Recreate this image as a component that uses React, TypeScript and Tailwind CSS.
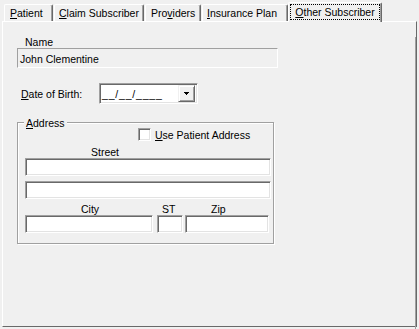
const sunken =
  'border border-t-[#a0a0a0] border-l-[#a0a0a0] border-b-white border-r-white bg-white shadow-[inset_1px_1px_0_#696969,inset_-1px_-1px_0_#e3e3e3]';

const tabBase =
  'flex h-[17px] items-center rounded-t-[2px] border-t border-l border-r border-t-white border-l-white border-r-[#696969] shadow-[inset_-1px_0_0_#a0a0a0]';

function Key({ children }: { children: string }) {
  return <span className="underline underline-offset-[1px]">{children}</span>;
}

export default function App() {
  return (
    <div className="flex h-[329px] w-[419px] flex-col bg-[#f0f0f0] px-[2px] pt-[2px] pb-[2px] font-['Liberation_Sans',Arial,sans-serif] text-[10.5px] leading-[12px] text-black">
      {/* tab strip */}
      <div className="flex h-[19px] items-end pl-[2px]">
        <div className={`${tabBase} mr-[1px] w-[49px] pl-[5px]`}>
          <span>
            <Key>P</Key>atient
          </span>
        </div>
        <div className={`${tabBase} mr-[1px] w-[90px] pl-[4px]`}>
          <span>
            <Key>C</Key>laim Subscriber
          </span>
        </div>
        <div className={`${tabBase} mr-[1px] w-[56px] pl-[5px]`}>
          <span>
            Pro<Key>v</Key>iders
          </span>
        </div>
        <div className={`${tabBase} w-[86px] pl-[4px]`}>
          <span>
            <Key>I</Key>nsurance Plan
          </span>
        </div>
        <div className="relative z-10 -mb-px flex h-[20px] w-[94px] items-start rounded-t-[2px] border-t border-l border-r border-t-white border-l-white border-r-[#696969] bg-[#f0f0f0] pt-[1px] pl-[1px] shadow-[inset_-1px_0_0_#a0a0a0]">
          <div className="flex h-[16px] w-[90px] items-center justify-center border border-dotted border-black">
            <span>
              <Key>O</Key>ther Subscriber
            </span>
          </div>
        </div>
      </div>

      {/* page */}
      <div className="flex-1 border border-t-white border-l-white border-r-[#696969] border-b-[#696969]">
        <div className="h-full border-r border-b border-r-[#a0a0a0] border-b-[#a0a0a0]">
          <div className="mt-[15px] ml-[22px] h-[11px] leading-[11px]">Name</div>
          <div className="ml-[14px] flex h-[20px] w-[261px] items-center border border-t-[#a0a0a0] border-l-[#a0a0a0] border-b-white border-r-white pt-[1px] pl-[2px]">
            John Clementine
          </div>

          <div className="mt-[15px] flex h-[21px] items-center pl-[18px]">
            <div className="w-[78px]">
              <Key>D</Key>ate of Birth:
            </div>
            <div className={`${sunken} flex h-full w-[99px] items-center justify-between pr-[2px] pl-[2px]`}>
              <span className="pt-[1px] tracking-[0.8px]">__/__/____</span>
              <div className="flex h-[17px] w-[17px] items-center justify-center border border-t-[#f0f0f0] border-l-[#f0f0f0] border-b-[#696969] border-r-[#696969] bg-[#f0f0f0] shadow-[inset_1px_1px_0_#fff,inset_-1px_-1px_0_#a0a0a0]">
                <svg width="5" height="3" viewBox="0 0 5 3">
                  <path d="M0 0h5v1H0zM1 1h3v1H1zM2 2h1v1H2z" fill="#000" />
                </svg>
              </div>
            </div>
          </div>

          {/* address group */}
          <div className="relative mt-[18px] ml-[14px] h-[122px] w-[257px] border border-[#a0a0a0] shadow-[inset_1px_1px_0_#fff,1px_1px_0_#fff]">
            <div className="absolute top-[-6px] left-[6px] bg-[#f0f0f0] px-[2px] leading-[12px]">
              <Key>A</Key>ddress
            </div>

            <div className="mt-[5px] flex h-[13px] items-center pl-[120px]">
              <div className={`${sunken} h-[13px] w-[13px]`} />
              <span className="ml-[4px]">
                <Key>U</Key>se Patient Address
              </span>
            </div>

            <div className="mt-[5px] pl-[73px]">Street</div>
            <div className={`${sunken} ml-[7px] h-[18px] w-[246px]`} />
            <div className={`${sunken} mt-[5px] ml-[7px] h-[18px] w-[246px]`} />

            <div className="mt-[4px] flex pl-[7px]">
              <span className="w-[137px] pl-[56px]">City</span>
              <span className="w-[49px]">ST</span>
              <span>Zip</span>
            </div>
            <div className="ml-[7px] flex h-[18px]">
              <div className={`${sunken} h-full w-[128px]`} />
              <div className={`${sunken} ml-[4px] h-full w-[26px]`} />
              <div className={`${sunken} ml-[2px] h-full w-[84px]`} />
            </div>
          </div>
        </div>
      </div>
    </div>
  );
}
